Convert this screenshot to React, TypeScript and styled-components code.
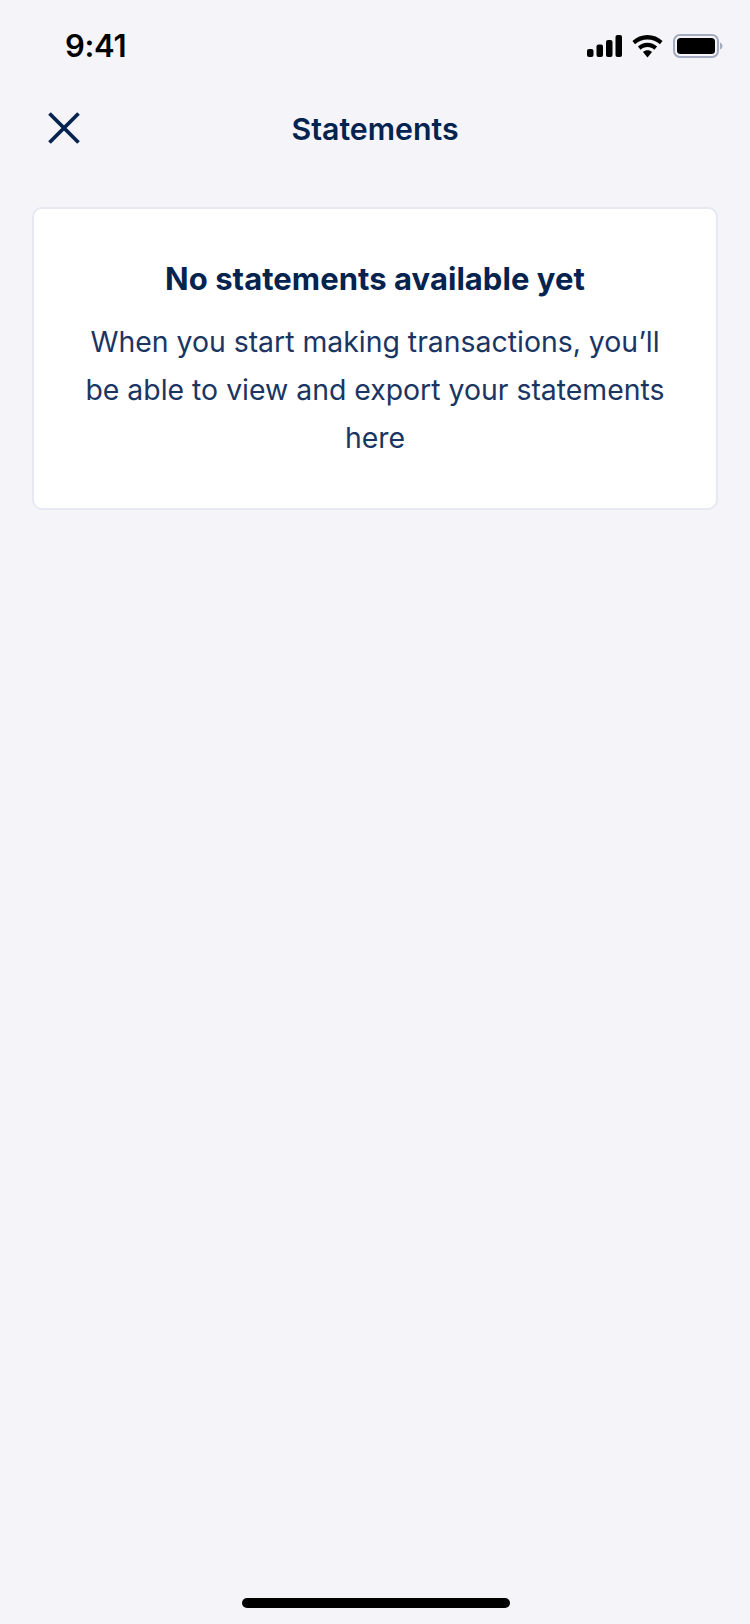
import styled, { createGlobalStyle } from 'styled-components';

const GlobalStyle = createGlobalStyle`
  html, body {
    margin: 0;
    padding: 0;
    background: #f4f4f9;
  }
`;

const Page = styled.div`
  width: 750px;
  height: 1624px;
  display: flex;
  flex-direction: column;
  background: #f4f4f9;
  font-family: Inter, "Liberation Sans", sans-serif;
  overflow: hidden;
`;

const StatusBar = styled.div`
  height: 90px;
  box-sizing: border-box;
  padding: 27px 27px 0 65px;
  display: flex;
  justify-content: space-between;
  align-items: flex-start;
`;

const Clock = styled.span`
  font-size: 31px;
  line-height: 38px;
  font-weight: 600;
  letter-spacing: -0.3px;
  color: #000;
`;

const StatusIcons = styled.div`
  display: flex;
  align-items: center;
  gap: 10px;
  margin-top: 7px;
`;

const NavBar = styled.header`
  height: 76px;
  display: flex;
  align-items: center;
  position: relative;
  padding-left: 48px;
`;

const CloseButton = styled.button`
  width: 32px;
  height: 32px;
  padding: 0;
  border: 0;
  background: none;
  display: flex;
`;

const Title = styled.h1`
  position: absolute;
  left: 0;
  right: 0;
  margin: 2px 0 0;
  text-align: center;
  font-size: 30.3px;
  line-height: 40px;
  font-weight: 600;
  color: #04234f;
`;

const Card = styled.section`
  margin: 41px 32px 0 32px;
  height: 303px;
  box-sizing: border-box;
  padding: 50px 40px 0;
  background: #fff;
  border: 2px solid #e6e9f2;
  border-radius: 10px;
  text-align: center;
`;

const CardTitle = styled.h2`
  margin: 0;
  font-size: 31px;
  line-height: 40px;
  font-weight: 700;
  letter-spacing: 0.05px;
  color: #04234f;
`;

const CardText = styled.p`
  margin: 19px 0 0;
  font-size: 28.4px;
  line-height: 48px;
  font-weight: 400;
  color: #1b3563;
`;

const HomeIndicator = styled.div`
  width: 268px;
  height: 10px;
  margin: auto 240px 16px 242px;
  border-radius: 5px;
  background: #000;
`;

export default function App() {
  return (
    <Page>
      <GlobalStyle />
      <StatusBar>
        <Clock>9:41</Clock>
        <StatusIcons>
          <svg width="35" height="22" viewBox="0 0 35 22">
            <rect x="0" y="14" width="6.500" height="8" rx="2" fill="#000" />
            <rect x="9.500" y="9.500" width="6.500" height="12.500" rx="2" fill="#000" />
            <rect x="19" y="5" width="6.500" height="17" rx="2" fill="#000" />
            <rect x="28.500" y="0" width="6.500" height="22" rx="2" fill="#000" />
          </svg>
          <svg width="31" height="23" viewBox="0 0 32 24">
            <path d="M16 0C10 0 4.500 2.300 0.300 6.200L3 9.600C6.500 6.300 11 4.600 16 4.600S25.500 6.300 29 9.600L31.700 6.200C27.500 2.300 22 0 16 0Z" fill="#000" />
            <path d="M16 8C12.200 8 8.700 9.400 6 11.900L8.800 15.300C10.700 13.600 13.200 12.600 16 12.600S21.300 13.600 23.200 15.300L26 11.900C23.300 9.400 19.800 8 16 8Z" fill="#000" />
            <path d="M16 16C14.200 16 12.600 16.600 11.300 17.700L16 23.500L20.700 17.700C19.400 16.600 17.800 16 16 16Z" fill="#000" />
          </svg>
          <svg width="50" height="24" viewBox="0 0 50 24">
            <rect x="1" y="1" width="44" height="22" rx="6" fill="none" stroke="#a3abc0" strokeWidth="2" />
            <rect x="4" y="4" width="38" height="16" rx="3.500" fill="#000" />
            <path d="M47 8.500C48.500 9 49.500 10.500 49.500 12S48.500 15 47 15.500Z" fill="#a3abc0" />
          </svg>
        </StatusIcons>
      </StatusBar>
      <NavBar>
        <CloseButton aria-label="Close">
          <svg width="32" height="32" viewBox="0 0 32 32">
            <path d="M1.500 1.500L30.500 30.500M30.500 1.500L1.500 30.500" stroke="#04234f" strokeWidth="3.800" fill="none" />
          </svg>
        </CloseButton>
        <Title>Statements</Title>
      </NavBar>
      <Card>
        <CardTitle>No statements available yet</CardTitle>
        <CardText>
          When you start making transactions, you’ll be able to view and export your statements here
        </CardText>
      </Card>
      <HomeIndicator />
    </Page>
  );
}
